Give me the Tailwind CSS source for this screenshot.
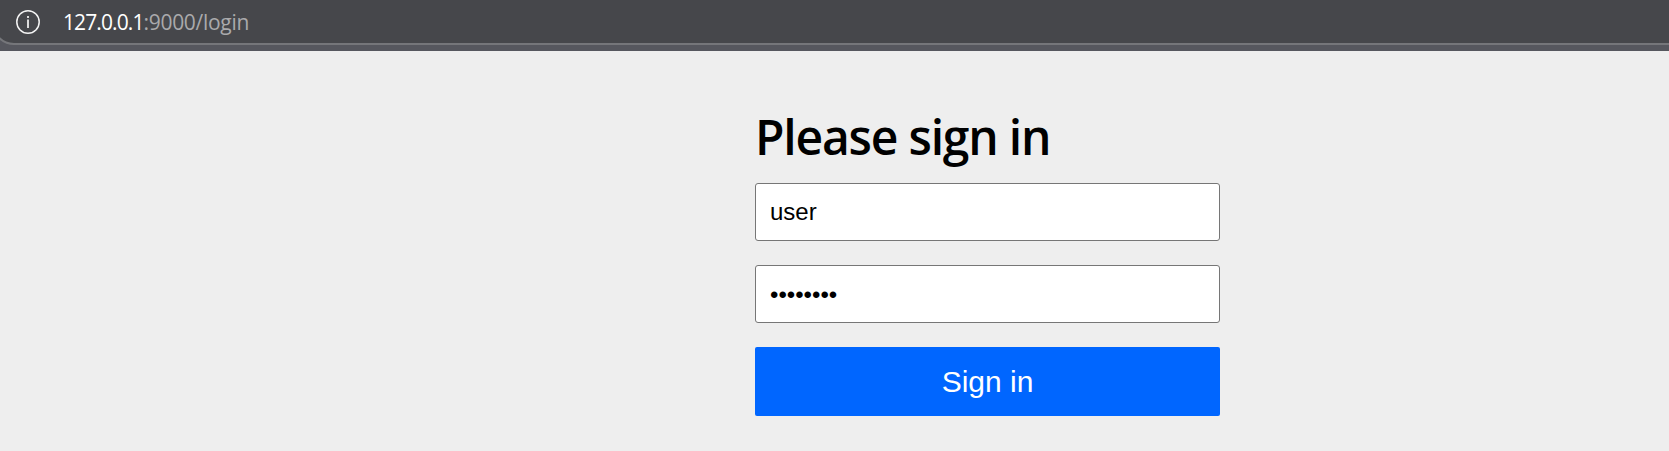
<!DOCTYPE html>
<html lang="en">
<head>
<meta charset="utf-8">
<title>Please sign in</title>
<script src="https://cdn.jsdelivr.net/npm/@tailwindcss/browser@4"></script>
</head>
<body class="h-screen overflow-hidden bg-[#eeeeee] text-black font-['Liberation_Sans',sans-serif]">
<header class="h-[51px] overflow-hidden bg-[#56575e]">
  <div class="-mt-6 -ml-[8px] -mr-8 h-[69px] pt-[22px] rounded-bl-[22px] border-2 border-[#75767a] bg-[#46474b] flex items-center">
    <svg class="ml-[22px] size-6 shrink-0" viewBox="0 0 24 24" fill="none" stroke="#f4f4f4" stroke-width="1.5"><circle cx="12" cy="12" r="11.2"/><path d="M12 9.5V18M12 6V8" stroke="#dcdcdc" stroke-width="2"/></svg>
    <div class="ml-[23px] text-[21px] leading-6 tracking-[-0.3px] whitespace-nowrap font-['Open_Sans',sans-serif] text-[#aaaaac]"><span class="text-white tracking-[-0.9px]">127.0.0.1</span>:9000/login</div>
  </div>
</header>
<main>
  <form class="ml-[755px] w-[465px] pt-[56px]">
    <h2 class="mb-[16px] h-[60px] text-[48px] leading-[60px] tracking-[-1.2px] whitespace-nowrap font-semibold font-['Open_Sans',sans-serif]">Please sign in</h2>
    <div class="mb-6 h-[58px] rounded-[3px] border border-[#767676] bg-white px-[14px] text-2xl leading-[56px]">user</div>
    <div class="mb-6 h-[58px] rounded-[3px] border border-[#767676] bg-white px-[14px] text-2xl leading-[57px]">••••••••</div>
    <button type="button" class="block h-[69px] w-full rounded-[2px] bg-[#0066ff] text-[30px] leading-[69px] text-white">Sign in</button>
  </form>
</main>
</body>
</html>
